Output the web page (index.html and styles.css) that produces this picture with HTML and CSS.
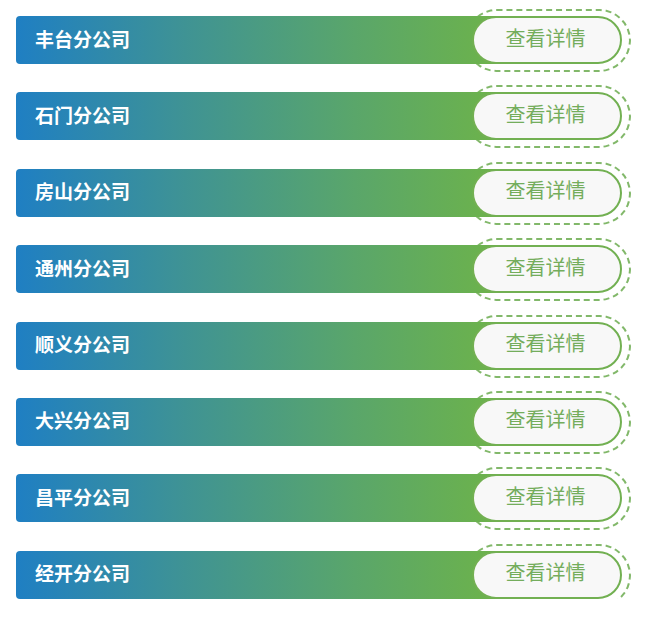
FILE: index.html
```html
<!DOCTYPE html>
<html lang="zh-CN">
  <head>
    <meta charset="UTF-8" />
    <meta name="viewport" content="width=device-width, initial-scale=1.0" />
    <title>分公司列表</title>
    <link rel="stylesheet" href="styles.css">
  </head>
  <body>
    <div class="list">
      <div class="row">
        <div class="bar">丰台分公司</div>
        <button class="detail">查看详情</button>
      </div>
      <div class="row">
        <div class="bar">石门分公司</div>
        <button class="detail">查看详情</button>
      </div>
      <div class="row">
        <div class="bar">房山分公司</div>
        <button class="detail">查看详情</button>
      </div>
      <div class="row">
        <div class="bar">通州分公司</div>
        <button class="detail">查看详情</button>
      </div>
      <div class="row">
        <div class="bar">顺义分公司</div>
        <button class="detail">查看详情</button>
      </div>
      <div class="row">
        <div class="bar">大兴分公司</div>
        <button class="detail">查看详情</button>
      </div>
      <div class="row">
        <div class="bar">昌平分公司</div>
        <button class="detail">查看详情</button>
      </div>
      <div class="row">
        <div class="bar">经开分公司</div>
        <button class="detail">查看详情</button>
      </div>
    </div>
  </body>
</html>
```

FILE: styles.css
```css
body {
  margin: 0;
  background: #ffffff;
  font-family: "Noto Sans CJK SC", "Noto Sans", sans-serif;
}

.list {
  display: flex;
  flex-direction: column;
  gap: 28.4px;
  padding: 16px 0 0 16px;
}

.row {
  display: flex;
  align-items: center;
  position: relative;
  z-index: 0;
}

.bar {
  width: 484px;
  height: 48px;
  box-sizing: border-box;
  padding: 0 0 4px 19px;
  display: flex;
  align-items: center;
  border-radius: 4px;
  background: linear-gradient(90deg, #1f7fc3 0%, #3f9394 35%, #5aa66a 70%, #6db34a 100%);
  color: #ffffff;
  font-size: 19px;
  line-height: 1;
  font-weight: bold;
}

.detail {
  position: relative;
  margin-left: -28px;
  width: 150px;
  height: 48px;
  box-sizing: border-box;
  border: 2px solid #72b052;
  border-radius: 24px;
  background: #f8f8f8;
  color: #74ad5c;
  font-family: inherit;
  font-size: 20px;
  line-height: 1;
  padding: 0 3px 5px 0;
  cursor: pointer;
}

.detail::before {
  content: "";
  position: absolute;
  z-index: -1;
  top: -9px;
  bottom: -10px;
  left: -9px;
  right: -11px;
  border: 2px dashed #82b86a;
  border-radius: 32px;
}
```
